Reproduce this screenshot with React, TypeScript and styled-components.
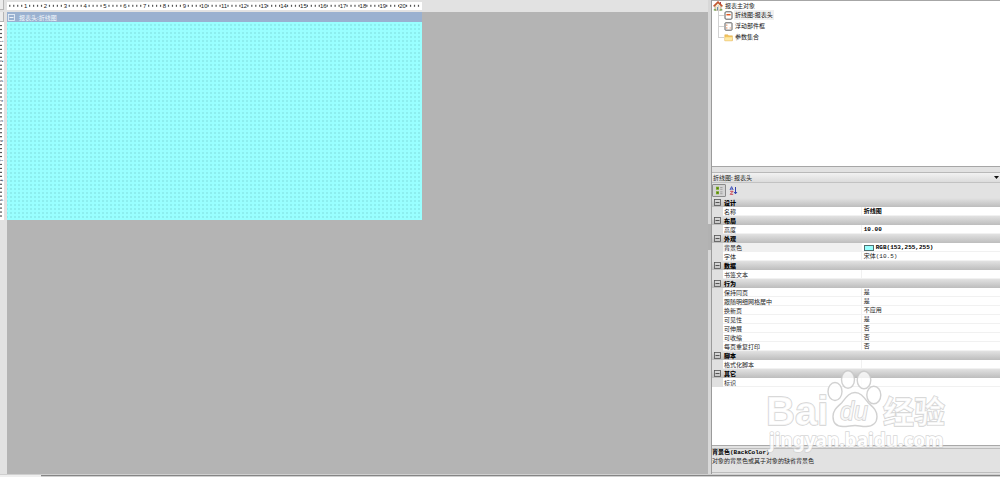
import React from 'react';
import styled, { createGlobalStyle } from 'styled-components';

const cjk = `'Noto Sans CJK SC', sans-serif`;
const mono = `'Liberation Mono', 'Noto Sans CJK SC', monospace`;

const GlobalStyle = createGlobalStyle`
  * { box-sizing: border-box; }
  body { margin: 0; background: #e2e2e2; font: 6px/9px ${cjk}; color: #222; }
  button, select { font: inherit; color: inherit; margin: 0; padding: 0; border: 0; background: none; }
`;

const Page = styled.div`
  min-height: 100vh;
  display: flex;
  flex-direction: column;
`;

const Workspace = styled.div`
  flex: 1;
  display: grid;
  grid-template-columns: minmax(0, 1fr) 3px 289px;
`;

const Designer = styled.main`
  display: grid;
  grid-template-columns: 7px minmax(0, 1fr);
  grid-template-rows: 12px 1fr;
`;

const Corner = styled.div`
  display: flex;
  align-items: flex-start;
`;

const CornerButton = styled.button`
  width: 4px;
  height: 10px;
  background: #ececec;
  border: solid #b5b5b5;
  border-width: 0 1px 1px 0;
`;

const RulerBar = styled.div`
  padding-top: 2px;
  overflow: hidden;
`;

const SideBar = styled.div`
  display: flex;
  flex-direction: column;
  overflow: hidden;
`;

const RulerSvg = styled.svg`
  display: block;
  background: #fff;
  font-family: 'Liberation Sans', sans-serif;
`;

const Surface = styled.div`
  background: #b4b4b4;
`;

const Section = styled.section`
  width: 415px;
`;

const SectionHeader = styled.header`
  display: flex;
  align-items: center;
  gap: 4px;
  height: 10px;
  padding-left: 1px;
  background: #9ab1d0;
  color: #f4f8fc;
`;

const SectionBody = styled.div`
  height: 198px;
  background: #99ffff radial-gradient(circle at 2px 2px, #8ceeee 0, #8ceeee 1px, transparent 1px) 2px 1px / 4px 4px;
`;

const ToggleButton = styled.button<{ $tone: string }>`
  display: block;
  width: 7px;
  height: 7px;
  color: ${(p) => p.$tone};
  svg { display: block; }
`;

const Splitter = styled.div`
  display: flex;
  align-items: center;
  background: #d8d8d8;
`;

const SplitterGrip = styled.div`
  width: 3px;
  height: 26px;
  background: #b2b2b2;
`;

const SidePanel = styled.aside`
  position: relative;
  display: flex;
  flex-direction: column;
  border-left: 1px solid #9b9b9b;
`;

const Tree = styled.nav`
  flex: 0 0 35vh;
  background: #fff;
  border: solid #a6a6a6;
  border-width: 1px 0;
`;

const TreeRoot = styled.div`
  display: flex;
  align-items: center;
  gap: 2px;
  height: 9px;
  padding-left: 1px;
`;

const TreeList = styled.ul`
  list-style: none;
  margin: 0;
  padding: 0 0 0 6px;
`;

const TreeItem = styled.li`
  position: relative;
  display: flex;
  align-items: center;
  height: 10px;
  padding-left: 6px;
  margin-bottom: 1px;
  &::before {
    content: '';
    position: absolute;
    left: 0;
    top: -5px;
    width: 5px;
    height: 10px;
    border: solid #d2d2d2;
    border-width: 0 0 1px 1px;
  }
`;

const TreeLabel = styled.a<{ $selected?: boolean }>`
  margin-left: 1px;
  padding: 0 1px;
  line-height: 10px;
  color: #111;
  text-decoration: none;
  background: ${(p) => (p.$selected ? '#f0f0f0' : 'transparent')};
`;

const SelectBox = styled.label`
  display: flex;
  align-items: center;
  height: 11px;
  margin-top: 5px;
  padding: 0 1px;
  border-top: 1px solid #b9b9b9;
  border-bottom: 1px solid #c2c2c2;
  background: linear-gradient(#f2f2f2, #dcdcdc);
`;

const ObjectSelect = styled.select`
  flex: 1;
  height: 9px;
  line-height: 9px;
  appearance: none;
  outline: none;
`;

const Toolbar = styled.div`
  display: flex;
  align-items: center;
  height: 15px;
`;

const ToolButton = styled.button<{ $active?: boolean }>`
  display: grid;
  place-items: center;
  width: 14px;
  height: 13px;
  border: 1px solid ${(p) => (p.$active ? '#8b8b8b' : 'transparent')};
  border-radius: 1px;
  background: ${(p) => (p.$active ? '#d4d4d4' : 'transparent')};
`;

const GridFrame = styled.div`
  flex: 1;
  background: #fff;
  border-bottom: 1px solid #a9a9a9;
`;

const PropTable = styled.table`
  width: 100%;
  table-layout: fixed;
  border-collapse: collapse;
`;

const Gutter = styled.td`
  height: 9px;
  padding: 0 0 0 2px;
  background: #e0e0e0;
`;

const GroupRow = styled.tr`
  background: linear-gradient(#e2e2e2, #bdbdbd);
  td { background: transparent; }
`;

const GroupName = styled.th`
  height: 9px;
  padding: 0 1px;
  line-height: 9px;
  text-align: left;
  font-weight: 900;
  color: #000;
`;

const PropRow = styled.tr<{ $selected?: boolean }>`
  box-shadow: inset 0 -1px #f1f1f1;
  th { background: ${(p) => (p.$selected ? '#f0f0f0' : 'transparent')}; }
`;

const PropName = styled.th`
  height: 9px;
  padding: 0 1px;
  line-height: 9px;
  text-align: left;
  font-weight: 400;
  border-right: 1px solid #f1f1f1;
`;

const PropValue = styled.td<{ $bold?: boolean }>`
  height: 9px;
  padding: 1px 2px 0;
  line-height: 8px;
  font-family: ${mono};
  font-weight: ${(p) => (p.$bold ? 700 : 400)};
  color: ${(p) => (p.$bold ? '#000' : '#222')};
`;

const Swatch = styled.span`
  display: inline-block;
  width: 10px;
  height: 6px;
  margin-right: 2px;
  vertical-align: top;
  margin-top: 1px;
  border: 1px solid #4f6f6f;
  background: #99ffff;
`;

const Help = styled.footer`
  height: 25px;
  margin: 2px 0 1px;
  border: solid #bdbdbd;
  border-width: 1px 0;
  font-family: ${mono};
`;

const HelpTitle = styled.h2`
  margin: 0;
  font-size: 6px;
  line-height: 8px;
  color: #000;
`;

const HelpText = styled.p`
  margin: 0;
`;

const Watermark = styled.svg`
  position: absolute;
  right: 51px;
  bottom: 18px;
  pointer-events: none;
`;

const StatusEdge = styled.div`
  display: flex;
  height: 3px;
  border-top: 1px solid #cfcfcf;
`;

const StatusTab = styled.div`
  width: 41px;
  background: #efefef;
`;

const StatusRest = styled.div`
  flex: 1;
  border-top: 1px solid #858585;
  background: #d0d0d0;
`;

const CM = 19.84;

function HorizontalRuler() {
  const marks = [];
  for (let i = 1; i < 105; i++) {
    const x = -1.2 + (i * CM) / 5;
    if (x < 1) continue;
    marks.push(
      i % 5 === 0 ? (
        <text key={i} x={x} y="6" fontSize="6" textAnchor="middle" fill="#222">{i / 5}</text>
      ) : (
        <rect key={i} x={x - 0.6} y="2.8" width="1.2" height="2" fill="#555" />
      ),
    );
  }
  return <RulerSvg width="415" height="8">{marks}</RulerSvg>;
}

function VerticalRuler() {
  const marks = [];
  for (let i = 1; i < 50; i++) {
    const y = -0.4 + (i * CM) / 5;
    marks.push(
      i % 5 === 0 ? (
        <text key={i} x="3" y={y} fontSize="3" fontWeight="700" textAnchor="middle" fill="#234" transform={`rotate(-90 3 ${y})`}>{i / 5}</text>
      ) : (
        <rect key={i} x="0" y={y - 0.6} width="2" height="1.2" fill="#555" />
      ),
    );
  }
  return <RulerSvg width="4" height="198">{marks}</RulerSvg>;
}

function Toggle({ label, tone = '#555' }: { label: string; tone?: string }) {
  return (
    <ToggleButton aria-label={label} $tone={tone}>
      <svg width="7" height="7" fill="none" stroke="currentColor">
        <rect x="0.5" y="0.5" width="6" height="6" strokeWidth="0.8" />
        <path d="M1.5 3.5h4" />
      </svg>
    </ToggleButton>
  );
}

const HomeIcon = () => (
  <svg width="10" height="10" viewBox="0 0 10 10">
    <path d="M2 5v4.2h6V5L5 2z" fill="#f6e9cf" stroke="#927a55" strokeWidth=".6" />
    <path d="M.6 5.4 5 1l4.4 4.4" fill="none" stroke="#c5542d" strokeWidth="1.5" />
    <path d="M7 1h1v2H7z" fill="#a44" />
    <path d="M4.2 6h1.7v3.2H4.2z" fill="#4a7ea8" />
    <path d="M.8 8.2h2v1.3h-2zM7.3 8.2h2v1.3h-2z" fill="#5a9f3c" />
  </svg>
);

const HeaderIcon = () => (
  <svg width="9" height="9" viewBox="0 0 9 9">
    <rect x="1" y=".8" width="7" height="7.4" rx="1" fill="#fff" stroke="#4d4d4d" strokeWidth=".9" />
    <path d="M2.4 3.7h4.2" stroke="#e2571e" strokeWidth="1.5" />
  </svg>
);

const FloatIcon = () => (
  <svg width="9" height="9" viewBox="0 0 9 9">
    <rect x="1" y=".8" width="7" height="7.4" rx=".6" fill="#fff" stroke="#4d4d4d" strokeWidth=".9" />
    <path d="M2.8 2.5v1.3M2.8 5.3v1.3M6.2 5.5v1" stroke="#e07a40" strokeWidth="1" />
  </svg>
);

const FolderIcon = () => (
  <svg width="9" height="9" viewBox="0 0 9 9">
    <path d="M.8 1.8h3l.8 1h3.8v5H.8z" fill="#f3c55f" stroke="#dca94a" strokeWidth=".5" />
    <path d="M1.2 4.2h7.2l-.6 3.4H1z" fill="#fde9a6" />
  </svg>
);

const CategoryIcon = () => (
  <svg width="9" height="9" viewBox="0 0 9 9">
    <path d="M1 .8h3v3H1zM1 5.2h3v3H1z" fill="#78a91e" />
    <path d="M2 1.8h1.2v1H2zM2 6.2h1.2v1H2z" fill="#3c6412" />
    <path d="M5.2 1.5h2.3M5.2 3.3h2.3M5.2 5.9h2.3M5.2 7.7h2.3" stroke="#8d8d8d" strokeWidth=".7" />
  </svg>
);

const SortIcon = () => (
  <svg width="9" height="9" viewBox="0 0 9 9" fill="none">
    <path d="M1 4 2.6.6 4.2 4M1.6 3h2" stroke="#3346b8" strokeWidth=".9" />
    <path d="M1.2 5.3h2.9L1.2 8.3h3" stroke="#c63342" strokeWidth=".9" />
    <path d="M6.5 1v6.6M5 6l1.5 1.8L8 6" stroke="#3242b0" strokeWidth="1" />
  </svg>
);

type Prop = { name: string; value: string; bold?: boolean; swatch?: boolean };

const groups: { title: string; items: Prop[] }[] = [
  { title: '设计', items: [{ name: '名称', value: '折线图', bold: true }] },
  { title: '布局', items: [{ name: '高度', value: '10.00', bold: true }] },
  {
    title: '外观',
    items: [
      { name: '背景色', value: 'RGB(153,255,255)', bold: true, swatch: true },
      { name: '字体', value: '宋体(10.5)' },
    ],
  },
  { title: '数据', items: [{ name: '书签文本', value: '' }] },
  {
    title: '行为',
    items: [
      { name: '保持同页', value: '是' },
      { name: '跟随明细网格居中', value: '是' },
      { name: '换新页', value: '不应用' },
      { name: '可见性', value: '是' },
      { name: '可伸展', value: '否' },
      { name: '可收缩', value: '否' },
      { name: '每页重复打印', value: '否' },
    ],
  },
  { title: '脚本', items: [{ name: '格式化脚本', value: '' }] },
  { title: '其它', items: [{ name: '标识', value: '' }] },
];

const tree = [
  { label: '折线图:报表头', icon: <HeaderIcon />, selected: true },
  { label: '浮动部件框', icon: <FloatIcon /> },
  { label: '参数集合', icon: <FolderIcon /> },
];

function BaiduMark() {
  return (
    <Watermark width="182" height="86" viewBox="0 0 182 86">
      <g fill="#fff" fillOpacity=".75" stroke="#c6c6c6" strokeOpacity=".8" strokeWidth="1.4">
        <ellipse cx="68" cy="21.5" rx="7" ry="9" />
        <ellipse cx="81" cy="9.5" rx="6.5" ry="8.8" />
        <ellipse cx="97" cy="10" rx="6.8" ry="8.8" />
        <ellipse cx="106.8" cy="25" rx="7" ry="8.8" />
        <path d="M88 22.5c6 0 9 5 13 10 4 4 9 7 9 14 0 6-4 10-11 10-5 0-7-1-11-1s-7 1-12 1c-7 0-10-4-10-10 0-7 5-10 9-14 4-5 7-10 13-10z" />
        <g fontFamily="'Liberation Sans', sans-serif" fontWeight="700" paintOrder="stroke">
          <text x="-1" y="55" fontSize="40">Bai</text>
          <text x="73" y="50" fontSize="25" fontStyle="italic" fontWeight="400">du</text>
        </g>
        <text x="116" y="53" fontSize="31" fontWeight="700" fontFamily={cjk} paintOrder="stroke">经验</text>
      </g>
      <text x="2" y="77" fontSize="19" fontWeight="700" fontFamily="'Noto Sans', sans-serif" fill="#fff" stroke="#d0d0d0" strokeWidth="1.4" paintOrder="stroke" opacity=".85">jingyan.baidu.com</text>
    </Watermark>
  );
}

export default function App() {
  return (
    <Page>
      <GlobalStyle />
      <Workspace>
        <Designer>
          <Corner><CornerButton aria-label="标尺" /></Corner>
          <RulerBar><HorizontalRuler /></RulerBar>
          <SideBar>
            <CornerButton aria-label="报表头" />
            <VerticalRuler />
          </SideBar>
          <Surface>
            <Section>
              <SectionHeader>
                <Toggle label="折叠" tone="#eef4fb" />
                报表头:折线图
              </SectionHeader>
              <SectionBody />
            </Section>
          </Surface>
        </Designer>
        <Splitter><SplitterGrip /></Splitter>
        <SidePanel>
          <Tree>
            <TreeRoot><HomeIcon />报表主对象</TreeRoot>
            <TreeList>
              {tree.map((t) => (
                <TreeItem key={t.label}>
                  {t.icon}
                  <TreeLabel href="#" $selected={t.selected}>{t.label}</TreeLabel>
                </TreeItem>
              ))}
            </TreeList>
          </Tree>
          <SelectBox>
            <ObjectSelect aria-label="对象"><option>折线图: 报表头</option></ObjectSelect>
            <svg width="5" height="3"><path d="M0 0h5L2.5 3z" fill="#111" /></svg>
          </SelectBox>
          <Toolbar>
            <ToolButton $active aria-label="按分类"><CategoryIcon /></ToolButton>
            <ToolButton aria-label="按字母"><SortIcon /></ToolButton>
          </Toolbar>
          <GridFrame>
            <PropTable>
              <colgroup>
                <col width="11" />
                <col width="48%" />
                <col />
              </colgroup>
              {groups.map((g) => (
                <tbody key={g.title}>
                  <GroupRow>
                    <Gutter><Toggle label={g.title} /></Gutter>
                    <GroupName colSpan={2}>{g.title}</GroupName>
                  </GroupRow>
                  {g.items.map((p) => (
                    <PropRow key={p.name} $selected={p.swatch}>
                      <Gutter />
                      <PropName scope="row">{p.name}</PropName>
                      <PropValue $bold={p.bold}>
                        {p.swatch && <Swatch />}
                        {p.value}
                      </PropValue>
                    </PropRow>
                  ))}
                </tbody>
              ))}
            </PropTable>
          </GridFrame>
          <Help>
            <HelpTitle>背景色(BackColor)</HelpTitle>
            <HelpText>对象的背景色或其子对象的缺省背景色</HelpText>
          </Help>
          <BaiduMark />
        </SidePanel>
      </Workspace>
      <StatusEdge><StatusTab /><StatusRest /></StatusEdge>
    </Page>
  );
}
